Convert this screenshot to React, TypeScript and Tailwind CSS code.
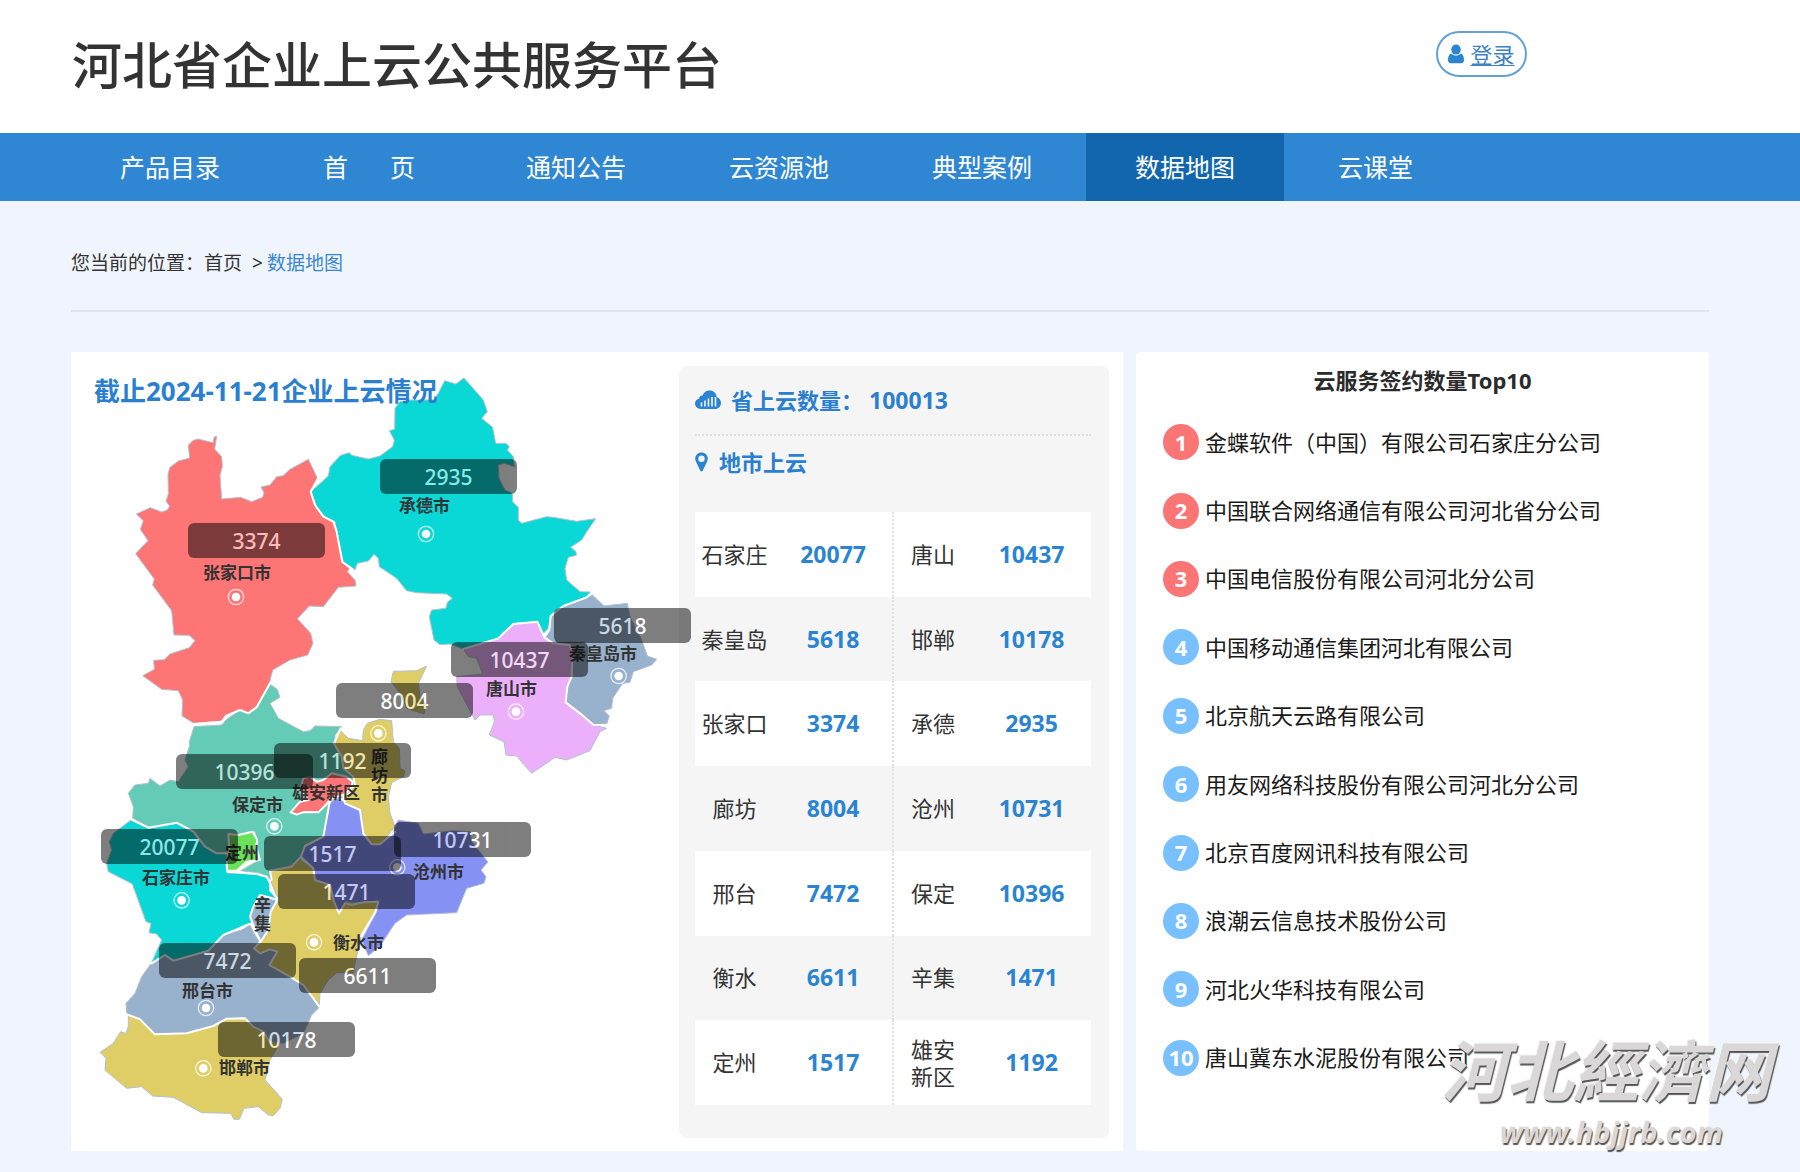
import { useState } from "react";

// ─────────────────────────────────────────────────────────────────────────────
// 河北省企业上云公共服务平台 — 数据地图
// ─────────────────────────────────────────────────────────────────────────────

interface Region {
  name:   string;
  fill:   string;
  origin: string; // translate of the tile the outline was traced on
  d:      string;
}

interface City {
  name:      string;
  value:     number;
  box:       [number, number];
  label:     [number, number];
  dot?:      [number, number];
  vertical?: boolean;
}

const NAV = ["产品目录", "首页", "通知公告", "云资源池", "典型案例", "数据地图", "云课堂"];

const REGIONS: Region[] = [
  {
    name: "张家口",
    fill: "#fd7575",
    origin: "translate(0 0)",
    d: "M440 258L432 262 429 278 384 267 368 272 355 286 359 324 325 333 300 352 294 372 295 432 288 454 299 468 292 480 275 486 241 473 199 492 220 512 211 538 234 572 197 611 253 687 248 705 305 782 312 855 358 856 375 872 358 893 300 912 283 929 251 931 253 958 218 977 275 1018 325 1022 338 1050 336 1098 372 1120 455 1113 468 1096 510 1078 535 1088 560 1070 598 1000 608 960 660 930 713 915 729 880 722 850 682 806 718 768 760 770 805 712 858 708 855 690 832 665 838 655 817 636 800 545 790 515 760 500 735 465 722 425 743 386 715 328 660 358 640 377 620 380 600 405 573 411 582 428 578 442 545 455 512 442 455 447 450 375 457 350 455 320 434 297Z",
  },
  {
    name: "承德",
    fill: "#0ad8d6",
    origin: "translate(690 0)",
    d: "M492 84L468 102 434 92 415 130 400 150 330 150 300 155 285 175 284 238 268 242 283 270 278 290 240 318 205 327 155 316 148 308 122 316 90 350 85 378 33 425 50 470 75 500 105 515 112 560 130 635 165 660 172 640 205 633 222 613 235 625 238 650 290 685 320 722 350 728 440 732 457 745 442 757 438 775 395 780 388 800 402 870 420 884 450 882 490 897 595 865 640 822 712 815 730 850 745 835 752 795 790 768 860 740 872 726 840 725 800 690 795 655 805 622 829 616 828 605 812 592 845 570 860 545 887 506 830 514 760 502 740 500 665 520 655 510 655 472 637 455 638 435 636 430 615 420 597 385 595 345 612 340 643 350 640 320 622 300 628 290 618 280 587 280 578 232 545 205 562 185 550 150Z",
  },
  {
    name: "秦皇岛",
    fill: "#98b1cc",
    origin: "translate(690 0)",
    d: "M877 735L912 768 982 760 990 800 1025 870 1042 918 1070 928 1055 945 1000 965 990 997 968 1000 938 1045 935 1075 912 1082 928 1098 920 1122 880 1123 840 1090 797 1057 802 1010 815 980 818 905 808 885 760 880 733 862 748 840 755 798 792 768 860 745Z",
  },
  {
    name: "唐山",
    fill: "#ecb0fa",
    origin: "translate(690 0)",
    d: "M712 815L640 820 595 865 490 897 505 920 530 925 548 972 470 980 472 1010 525 1110 540 1095 580 1095 583 1115 568 1155 612 1175 618 1215 650 1218 695 1270 765 1222 800 1230 870 1202 900 1145 920 1135 880 1125 840 1090 797 1057 802 1010 815 980 818 905 808 885 760 880 733 862 722 835Z",
  },
  {
    name: "廊坊北",
    fill: "#dfce65",
    origin: "translate(690 0)",
    d: "M380 948L350 962 280 964 273 995 300 1030 320 1075 372 1092 378 1065 360 1040 355 1000Z",
  },
  {
    name: "保定",
    fill: "#64ccb6",
    origin: "translate(0 930)",
    d: "M372 200L455 195 470 178 510 150 535 160 560 142 600 73 622 88 630 112 600 130 625 175 700 215 720 212 735 198 815 200 795 225 795 260 830 320 860 350 850 400 780 425 760 530 705 555 692 600 650 620 600 635 605 660 570 640 512 632 550 610 570 600 555 515 505 525 475 520 475 575 440 580 405 560 375 515 320 490 240 503 188 475 190 440 175 400 195 375 235 370 240 355 270 378 300 360 325 365 355 320 345 300 358 260 358 245Z",
  },
  {
    name: "廊坊",
    fill: "#dfce65",
    origin: "translate(630 930)",
    d: "M250 210L262 190 300 178 335 182 340 245 358 265 360 325 375 333 370 350 335 368 325 410 330 460 345 500 320 530 300 553 275 553 250 520 245 450 195 430 190 405 225 375 220 350 190 325 185 290 162 250 180 210 205 235 248 242Z",
  },
  {
    name: "沧州",
    fill: "#8591f3",
    origin: "translate(630 930)",
    d: "M170 415L150 430 130 530 75 560 63 590 100 625 105 660 150 675 162 725 177 760 195 730 215 735 250 725 295 725 290 755 245 840 265 887 300 858 345 790 380 765 530 758 560 685 612 670 618 650 603 630 624 606 575 545 570 515 520 512 430 522 415 490 355 480 340 515 300 553 275 553 250 525 245 455 200 430Z",
  },
  {
    name: "石家庄",
    fill: "#0ad8d6",
    origin: "translate(0 930)",
    d: "M183 480L235 505 320 490 370 515 405 560 440 580 470 580 468 625 475 640 510 638 560 642 590 650 600 670 600 690 622 715 570 705 550 740 540 770 545 790 530 795 500 808 460 825 415 872 310 902 285 885 245 908 275 840 260 822 237 818 243 790 228 785 187 672 180 668 115 635 110 610 125 570 118 545 130 520Z",
  },
  {
    name: "定州",
    fill: "#6ae35b",
    origin: "translate(0 930)",
    d: "M475 522L505 525 548 515 562 540 558 560 570 600 530 605 500 632 472 632 470 610 478 575Z",
  },
  {
    name: "雄安",
    fill: "#fd7575",
    origin: "translate(0 930)",
    d: "M662 455L690 425 715 420 690 390 700 355 720 350 740 365 760 360 785 340 830 350 848 365 840 400 800 410 770 430 745 455 700 455 680 462Z",
  },
  {
    name: "衡水",
    fill: "#dfce65",
    origin: "translate(0 1590)",
    d: "M600 -25L650 -40 692 -60 725 -35 740 5 780 15 792 60 807 100 825 65 880 70 925 62 915 95 875 165 855 250 850 278 800 278 775 300 750 340 748 375 700 315 660 290 598 255 622 215 600 208 570 220 552 205 572 185 590 165 600 100 625 60 605 10Z",
  },
  {
    name: "邢台",
    fill: "#98b1cc",
    origin: "translate(0 1590)",
    d: "M240 255L285 225 310 242 415 212 460 165 515 150 540 135 552 160 568 185 552 205 570 220 600 208 622 215 598 255 660 290 705 320 748 382 725 405 700 460 640 490 600 485 580 455 545 445 510 415 470 418 430 438 350 460 255 463 210 415 170 400 168 370 195 340 215 290Z",
  },
  {
    name: "辛集",
    fill: "#98b1cc",
    origin: "translate(0 1590)",
    d: "M570 45L622 60 602 95 595 150 572 185 560 160 540 110 550 80Z",
  },
  {
    name: "邯郸",
    fill: "#dfce65",
    origin: "translate(0 1590)",
    d: "M175 405L210 418 255 463 350 460 430 438 470 418 525 415 550 440 580 455 600 485 630 490 600 540 585 600 637 658 630 685 610 707 595 705 565 680 522 685 508 718 492 718 482 700 395 698 310 652 248 648 215 620 170 625 105 570 108 535 90 517 130 490 152 455 168 460 175 440Z",
  },
];

// White lines between neighbouring regions
const BORDERS = [
  "M743 386L722 425 735 465 760 500 790 515 800 545 817 636 848 658",
  "M372 1122L455 1115 468 1098 510 1080 535 1090 560 1072 600 1000",
  "M1180 897L1285 865 1330 822 1402 815 1423 862 1450 880 1498 885 1508 905 1505 980 1492 1010 1487 1057 1530 1090 1570 1124 1610 1125",
  "M1423 862L1438 840 1442 798 1480 768 1550 742 1565 728",
  "M812 1135L792 1180 815 1220 820 1255 850 1280 855 1305 820 1335 825 1360 870 1380 880 1450 905 1483 930 1483 975 1445",
  "M662 1387L690 1355 715 1350 690 1320 700 1285 720 1280 740 1295 760 1290 785 1270 830 1280 848 1295 840 1330 800 1340 780 1350 770 1362 745 1387 700 1387 680 1394Z",
  "M780 1350L760 1460 705 1488 693 1520 730 1555 735 1590 780 1605 792 1655 807 1690 825 1660 845 1665 880 1657 925 1655 915 1688 873 1758",
  "M693 1520L665 1550 600 1562 605 1590",
  "M183 1408L235 1433 320 1418 370 1445 405 1490 440 1510 470 1510",
  "M475 1452L505 1455 548 1445 562 1470 558 1490 570 1530 530 1535 500 1562 472 1562 470 1540 478 1505Z",
  "M472 1565L510 1568 560 1572 590 1580 600 1600 600 1620 622 1645",
  "M245 1840L285 1815 310 1832 415 1802 460 1755 500 1738 530 1725 545 1720",
  "M570 1635L550 1670 540 1700 560 1750 572 1775 595 1740 602 1685 622 1650Z",
  "M572 1775L552 1795 570 1810 600 1798 622 1805 598 1845 660 1880 700 1905 748 1970",
  "M170 1993L210 2008 255 2053 350 2050 430 2028 470 2006 525 2005 550 2030 580 2045 600 2078",
];

const CITIES: City[] = [
  { name: "张家口市", value: 3374,  box: [117, 171], label: [132, 209], dot: [498, 741] },
  { name: "承德市",   value: 2935,  box: [309, 107], label: [328, 142], dot: [1068, 552] },
  { name: "秦皇岛市", value: 5618,  box: [483, 256], label: [498, 290], dot: [1646, 978] },
  { name: "唐山市",   value: 10437, box: [380, 290], label: [415, 325], dot: [1338, 1085] },
  { name: "廊坊市",   value: 8004,  box: [265, 331], label: [300, 395], dot: [925, 1150], vertical: true },
  { name: "保定市",   value: 10396, box: [105, 402], label: [161, 441], dot: [613, 1429] },
  { name: "雄安新区", value: 1192,  box: [203, 391], label: [221, 429] },
  { name: "石家庄市", value: 20077, box: [30, 477],  label: [71, 514],  dot: [335, 1651] },
  { name: "定州",     value: 1517,  box: [193, 484], label: [154, 489] },
  { name: "沧州市",   value: 10731, box: [323, 470], label: [342, 508], dot: [982, 1552] },
  { name: "辛集",     value: 1471,  box: [207, 522], label: [183, 543], vertical: true },
  { name: "衡水市",   value: 6611,  box: [228, 606], label: [262, 579], dot: [732, 1777] },
  { name: "邢台市",   value: 7472,  box: [88, 591],  label: [111, 627], dot: [408, 1974] },
  { name: "邯郸市",   value: 10178, box: [147, 670], label: [148, 704], dot: [400, 2155] },
];

const ROWS: [string, number, string, number][] = [
  ["石家庄", 20077, "唐山", 10437],
  ["秦皇岛", 5618, "邯郸", 10178],
  ["张家口", 3374, "承德", 2935],
  ["廊坊", 8004, "沧州", 10731],
  ["邢台", 7472, "保定", 10396],
  ["衡水", 6611, "辛集", 1471],
  ["定州", 1517, "雄安新区", 1192],
];

const TOP10 = [
  "金蝶软件（中国）有限公司石家庄分公司",
  "中国联合网络通信有限公司河北省分公司",
  "中国电信股份有限公司河北分公司",
  "中国移动通信集团河北有限公司",
  "北京航天云路有限公司",
  "用友网络科技股份有限公司河北分公司",
  "北京百度网讯科技有限公司",
  "浪潮云信息技术股份公司",
  "河北火华科技有限公司",
  "唐山冀东水泥股份有限公司",
];

function UserIcon() {
  return (
    <svg viewBox="0 0 16 20" className="h-5 w-4 fill-[#2a84d2]" aria-hidden="true">
      <ellipse cx="8" cy="5.6" rx="4.7" ry="5" />
      <path d="M3.4 9.4C1 10 0 12.500 0 16c0 2 1 3.200 2.800 3.200h10.400C15 19.200 16 18 16 16c0-3.500-1-6-3.400-6.600C11.500 10.700 9.900 11.600 8 11.600S4.500 10.700 3.400 9.400Z" />
    </svg>
  );
}

function CloudChartIcon() {
  return (
    <svg viewBox="0 0 26 20" className="h-5 w-[26px]" aria-hidden="true">
      <path
        d="M6 19C2.500 19 0 16.600 0 13.600 0 11 1.800 9 4.200 8.400 4.300 6.500 5.800 5.200 7.600 5.400 8.800 2.200 11.400.6 14.400.6c4 0 7 2.700 7.400 6.500 2.400.9 4.200 3.200 4.200 5.900 0 3.400-2.500 6-6 6Z"
        fill="#2a84d2"
      />
      <path d="M6.500 16.500v-4M10 16.500v-6M13.500 16.500V8.500M17 16.500V7M20.500 16.500V7" stroke="#f5f5f5" strokeWidth="1.600" />
    </svg>
  );
}

function PinIcon() {
  return (
    <svg viewBox="0 0 13 20" className="h-5 w-[13px]" aria-hidden="true">
      <path
        d="M6.500.5C2.900.5.200 3.200.200 6.700c0 1.200.3 2.100.8 3.100l4.300 8.900c.5 1 1.900 1 2.400 0L12 9.800c.5-1 .8-1.900.8-3.100C12.800 3.200 10.100.5 6.500.5Zm0 9.400a3.200 3.200 0 1 1 0-6.400 3.200 3.200 0 0 1 0 6.400Z"
        fill="#2a84d2"
      />
    </svg>
  );
}

function HebeiMap() {
  return (
    <div className="relative h-[799px] w-[608px] shrink-0">
      <svg viewBox="3 6 1824 2397" className="block h-full w-full" role="img" aria-label="河北省地图">
        {REGIONS.map((r) => (
          <path
            key={r.name}
            d={r.d}
            transform={r.origin}
            fill={r.fill}
            stroke="#b4c0cf"
            strokeWidth="3"
            strokeLinejoin="round"
          />
        ))}
        {BORDERS.map((d) => (
          <path key={d} d={d} fill="none" stroke="#fff" strokeWidth="6" strokeLinejoin="round" strokeLinecap="round" />
        ))}
        {CITIES.map((c) =>
          c.dot ? (
            <g key={c.name}>
              <circle cx={c.dot[0]} cy={c.dot[1]} r="23" fill="none" stroke="#fff" strokeOpacity="0.75" strokeWidth="4" />
              <circle cx={c.dot[0]} cy={c.dot[1]} r="13" fill="#fff" />
            </g>
          ) : null
        )}
      </svg>

      <h2 className="absolute left-[23px] top-[23px] text-[26px] leading-8 font-bold whitespace-nowrap text-[#2a7fd0]">
        截止2024-11-21企业上云情况
      </h2>

      {CITIES.map((c) => (
        <span
          key={c.name}
          style={{ left: c.label[0], top: c.label[1] }}
          className={
            c.vertical
              ? "absolute w-[17px] text-[17px] leading-[19px] font-bold break-all text-[#333]"
              : "absolute text-[17px] leading-6 font-bold whitespace-nowrap text-[#333]"
          }
        >
          {c.name}
        </span>
      ))}
      {CITIES.map((c) => (
        <span
          key={c.name}
          style={{ left: c.box[0], top: c.box[1] }}
          className="absolute z-10 h-[35px] w-[137px] rounded-md bg-black text-center text-[21px] leading-[37px] font-medium text-white opacity-50"
        >
          {c.value}
        </span>
      ))}
    </div>
  );
}

function CityTable() {
  return (
    <section className="mt-3.5 mr-3.5 h-[772px] min-w-0 flex-1 rounded-lg bg-[#f5f5f5] pr-[18px] pl-4">
      <h3 className="flex h-[70px] items-center border-b-2 border-dotted border-[#e0e0e0] text-[22px] font-bold text-[#2a7fd0]">
        <CloudChartIcon />
        <span className="ml-2.5">省上云数量：</span>
        <span className="ml-1.5 text-[23px]">100013</span>
      </h3>
      <h3 className="flex h-[76px] items-start pt-2.5 text-[22px] leading-8 font-bold text-[#2a7fd0]">
        <span className="flex h-8 items-center"><PinIcon /></span>
        <span className="ml-[11px]">地市上云</span>
      </h3>
      <table className="h-[593px] w-full table-fixed border-collapse text-center text-[22px] leading-[27px] text-[#333]">
        <colgroup>
          <col className="w-[20%]" />
          <col className="w-[30%]" />
          <col className="w-[20%]" />
          <col className="w-[30%]" />
        </colgroup>
        <tbody>
          {ROWS.map(([a, av, b, bv]) => (
            <tr key={a} className="h-[84px] odd:bg-white">
              <td>{a}</td>
              <td className="border-r-2 border-dotted border-[#e2e2e2] text-[23px] font-bold text-[#2a84d2]">{av}</td>
              <td className="px-4">{b}</td>
              <td className="text-[23px] font-bold text-[#2a84d2]">{bv}</td>
            </tr>
          ))}
        </tbody>
      </table>
    </section>
  );
}

function TopTen() {
  return (
    <section className="rounded-sm bg-white">
      <h2 className="pt-2.5 text-center text-[22px] leading-9 font-bold text-[#2b2b2b]">云服务签约数量Top10</h2>
      <ol className="mt-2.5 grid h-[684px] auto-rows-fr pl-[27px]">
        {TOP10.map((name, i) => (
          <li key={name} className="flex items-center gap-1.5 text-[22px] text-[#1a1a1a]">
            <span
              className={
                i < 3
                  ? "flex size-9 shrink-0 items-center justify-center rounded-full bg-[#fb7575] font-bold text-white"
                  : "flex size-9 shrink-0 items-center justify-center rounded-full bg-[#78c0ff] font-bold text-white"
              }
            >
              {i + 1}
            </span>
            <span className="whitespace-nowrap">{name}</span>
          </li>
        ))}
      </ol>
    </section>
  );
}

export default function App() {
  const [active, setActive] = useState("数据地图");

  return (
    <div className="relative min-h-screen overflow-hidden bg-[#f0f5fd] pb-5 font-['Noto_Sans','Noto_Sans_CJK_SC',sans-serif]">
      {/* ── En-tête ──────────────────────────────────────────────────── */}
      <header className="flex h-[133px] items-start bg-white pr-[273px] pl-[72px]">
        <h1 className="pt-[30px] text-[50px] leading-[70px] font-medium whitespace-nowrap text-[#333]">
          河北省企业上云公共服务平台
        </h1>
        <a
          href="#login"
          className="mt-[31px] ml-auto flex h-[46px] w-[91px] items-center justify-center gap-1.5 rounded-[23px] border-2 border-[#62a0d6] text-[22px] text-[#3f82c4]"
        >
          <UserIcon />
          <span className="underline decoration-1 underline-offset-2">登录</span>
        </a>
      </header>

      {/* ── Navigation ───────────────────────────────────────────────── */}
      <nav className="flex h-[68px] gap-[5px] bg-[#2f86d2] pl-[71px] text-[25px] text-white">
        {NAV.map((item) => (
          <button
            key={item}
            type="button"
            onClick={() => setActive(item)}
            className={item === active ? "bg-[#1166ad] px-[49px] pt-0.5" : "px-[49px] pt-0.5"}
          >
            {item === "首页" ? (
              <span className="flex w-[100px] gap-[42px]"><span>首</span><span>页</span></span>
            ) : (
              item
            )}
          </button>
        ))}
      </nav>

      <main className="pr-[91px] pl-[71px]">
        <div className="h-[111px] border-b-2 border-[#e1e4e8] pt-[46px] text-[19px] leading-8 text-[#333]">
          <p className="whitespace-pre">
            您当前的位置：<a href="#home">首页</a>
            <span className="mx-1 pl-1.5">&gt;</span>
            <a href="#map" className="text-[#3a86cf]">数据地图</a>
          </p>
        </div>

        <div className="mt-10 grid grid-cols-[1052fr_573fr] gap-[13px]">
          <div className="flex min-w-0 bg-white">
            <HebeiMap />
            <CityTable />
          </div>
          <TopTen />
        </div>
      </main>

      {/* ── Filigrane ────────────────────────────────────────────────── */}
      <div className="pointer-events-none absolute right-[29px] bottom-[22px] z-20 flex flex-col items-end text-[#d9d7d7] italic [text-shadow:1px_2px_1px_#555,-1px_-1px_0_#f4f4f4]">
        <span className="text-[66px] leading-[88px] font-bold whitespace-nowrap">河北經濟网</span>
        <span className="pr-12 text-[29px] leading-9 font-bold">www.hbjjrb.com</span>
      </div>
    </div>
  );
}
